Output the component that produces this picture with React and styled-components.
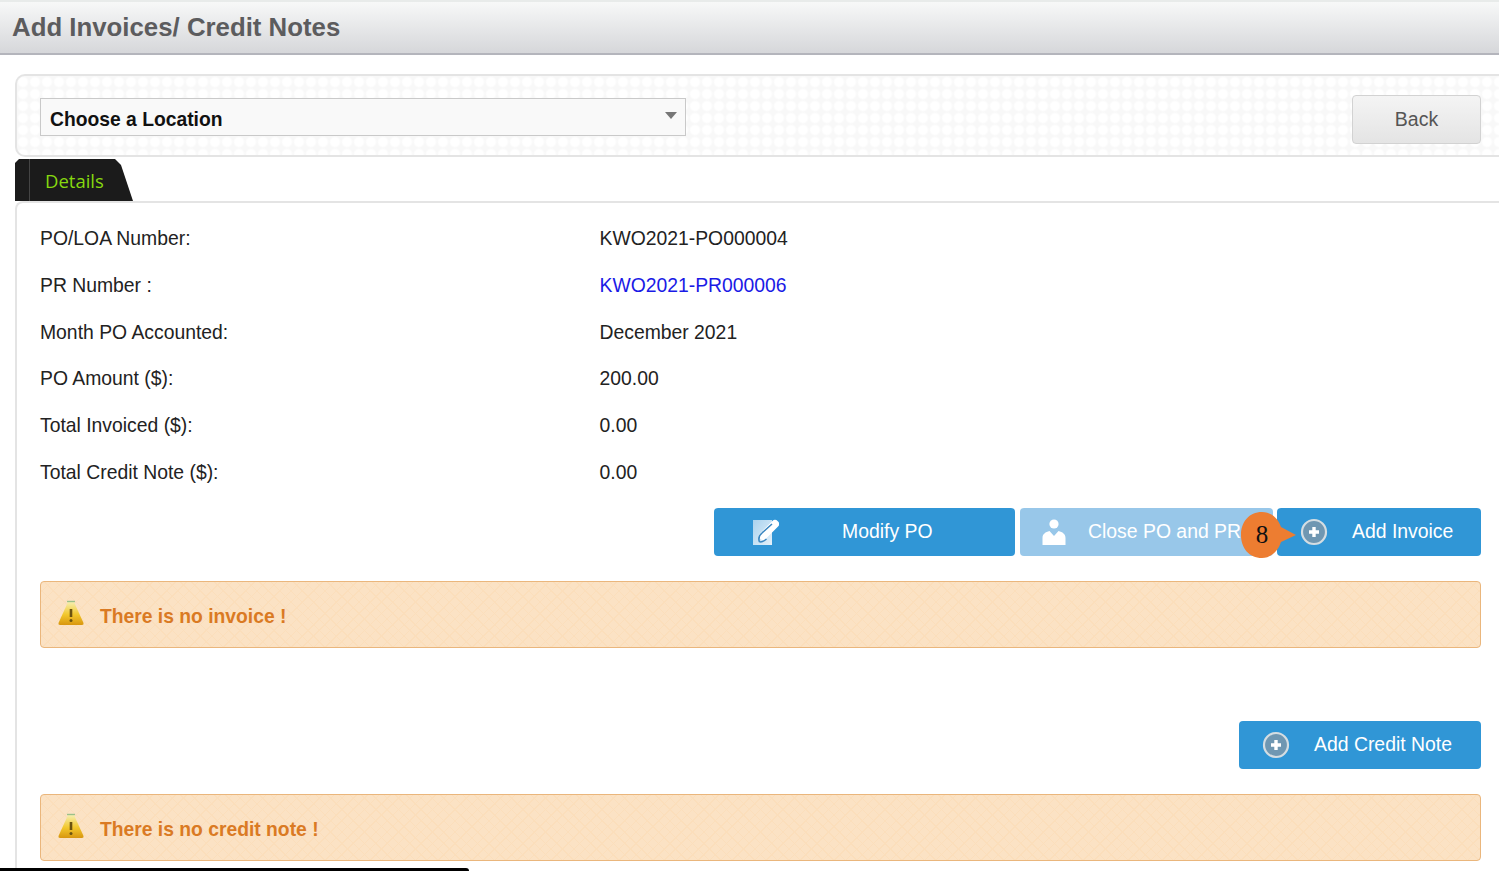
import React from "react";
import styled, { createGlobalStyle } from "styled-components";

const Global = createGlobalStyle`
  html, body { margin: 0; padding: 0; height: 871px; overflow: hidden; background: #fff; }
  body { font-family: "Liberation Sans", Arial, sans-serif; color: #222; }
  #root { height: 871px; position: relative; overflow: hidden; }
`;

const Header = styled.header`
  height: 55px;
  box-sizing: border-box;
  border-top: 2px solid #e8ebea;
  border-bottom: 2px solid #b4b5bc;
  background: linear-gradient(#f7f8f8, #d6d7da);
  padding-left: 12px;
  display: flex;
  align-items: center;
`;
const Title = styled.h1`
  margin: 0;
  font-size: 25.8px;
  font-weight: 700;
  color: #5c5c5e;
`;
const Page = styled.main`
  padding: 19px 0 0 15px;
`;
const Toolbar = styled.section`
  height: 83px;
  box-sizing: border-box;
  border: 2px solid #e4e4e4;
  border-right: 0;
  border-radius: 10px 0 0 10px;
  background-color: #fff;
  background-image: radial-gradient(circle at center, #fff 4px, #f8f8f8 6px);
  background-size: 12px 12px;
  display: flex;
  align-items: flex-start;
  justify-content: space-between;
  padding: 22px 18px 0 23px;
`;
const Select = styled.div`
  width: 646px;
  height: 38px;
  box-sizing: border-box;
  border: 1px solid #c9c9c9;
  background: #f9f9f9;
  display: flex;
  align-items: center;
  justify-content: space-between;
  padding: 6px 8px 0 9px;
  font-size: 19.3px;
  font-weight: 700;
  color: #111;
`;
const Caret = styled.span`
  width: 0;
  height: 0;
  border-left: 6px solid transparent;
  border-right: 6px solid transparent;
  border-top: 7px solid #777;
  margin: -10px 0 0;
`;
const BackButton = styled.button`
  width: 129px;
  height: 49px;
  margin-top: -3px;
  border: 1px solid #d2d2d2;
  border-radius: 4px;
  background: linear-gradient(#f4f4f4, #e4e4e4);
  color: #555;
  font: 19.5px "Liberation Sans", Arial, sans-serif;
`;
const TabRow = styled.nav`
  height: 44px;
  display: flex;
  align-items: flex-end;
`;
const Tab = styled.div`
  width: 118px;
  height: 42px;
  box-sizing: border-box;
  background: #1b1b1b;
  clip-path: polygon(0 4px, 4px 0, 100px 0, 106px 6px, 118px 42px, 0 42px);
  color: #86d80f;
  font: 18.5px "Open Sans", sans-serif;
  display: flex;
  align-items: center;
  padding-left: 30px;
  position: relative;
  &::before {
    content: "";
    position: absolute;
    left: 14px;
    top: 0;
    bottom: 0;
    width: 1px;
    background: #444;
  }
`;
const Panel = styled.section`
  height: 700px;
  box-sizing: border-box;
  border-top: 2px solid #e4e4e4;
  border-left: 2px solid #e4e4e4;
  border-top-left-radius: 8px;
  padding: 12px 18px 0 23px;
`;
const Detail = styled.div`
  height: 46.85px;
  display: grid;
  grid-template-columns: 559.5px 1fr;
  align-items: center;
  font-size: 19.35px;
  color: #222;
`;
const PrLink = styled.a`
  color: #1a1ae6;
  text-decoration: none;
`;
const Actions = styled.div`
  display: flex;
  justify-content: flex-end;
  gap: 4px;
  margin-top: ${(p) => p.$top}px;
`;
const ActionButton = styled.button`
  width: ${(p) => p.$w}px;
  height: 48px;
  box-sizing: border-box;
  border: 0;
  border-radius: 4px;
  margin-right: ${(p) => p.$after || 0}px;
  background: ${(p) => (p.$muted ? "#98c7e9" : "#3096d6")};
  color: #fff;
  font: 19.4px "Liberation Sans", Arial, sans-serif;
  display: flex;
  align-items: center;
  padding-left: ${(p) => p.$pad}px;
  white-space: nowrap;
  overflow: hidden;
`;
const ButtonIcon = styled.svg`
  width: 28px;
  height: 28px;
  flex: none;
`;
const ButtonLabel = styled.span`
  margin-left: ${(p) => p.$gap}px;
  margin-top: -1px;
`;
const Alert = styled.div`
  height: 67px;
  box-sizing: border-box;
  margin-top: ${(p) => p.$top}px;
  border: 1px solid #eab67c;
  border-radius: 4px;
  background-color: #fbe2c4;
  background-image: repeating-linear-gradient(45deg, #fbdebb 0 1px, transparent 1px 8px),
    repeating-linear-gradient(-45deg, #fbdebb 0 1px, transparent 1px 8px);
  display: flex;
  align-items: center;
  padding-left: 17px;
  font-size: 19.3px;
  font-weight: 700;
  color: #da7a23;
`;
const AlertText = styled.span`
  margin-top: 4px;
`;
const AlertIcon = styled.svg`
  width: 26px;
  height: 26px;
  margin: -3px 16px 0 0;
  flex: none;
`;
const Callout = styled.svg`
  position: absolute;
  left: 1240px;
  top: 512px;
  width: 58px;
  height: 46px;
`;
const CalloutText = styled.text`
  font-family: "Liberation Serif", serif;
  font-size: 25px;
  fill: #111;
`;
const BottomBar = styled.div`
  position: absolute;
  left: 0;
  bottom: 0;
  width: 469px;
  height: 3px;
  background: #000;
  border-top-right-radius: 3px;
`;

const PlusIcon = () => (
  <ButtonIcon viewBox="0 0 28 28">
    <circle cx="14" cy="14" r="12" fill="#6f97b2" stroke="#d4dde2" strokeWidth="2.2" />
    <path d="M14 9v10M9 14h10" stroke="#fff" strokeWidth="3.4" />
  </ButtonIcon>
);

const EditIcon = () => (
  <ButtonIcon viewBox="0 0 28 28">
    <defs>
      <linearGradient id="sheet" x1="0" y1="0" x2="1" y2="1">
        <stop offset="0" stopColor="#a9d2ee" />
        <stop offset="1" stopColor="#e4f1fa" />
      </linearGradient>
    </defs>
    <rect x="2" y="2" width="19" height="25" fill="url(#sheet)" />
    <path d="M12 18L24 6" stroke="#fff" strokeWidth="8" strokeLinecap="round" />
    <path d="M8.500 24c-1.500-4 0-7 2.500-9L21 6" fill="none" stroke="#3a86c0" strokeWidth="1.600" />
    <path d="M8.500 24c3 0 5-1 7-3" fill="none" stroke="#3a86c0" strokeWidth="1.400" />
  </ButtonIcon>
);

const UserIcon = () => (
  <ButtonIcon viewBox="0 0 28 28">
    <circle cx="14" cy="6" r="4.600" fill="#fff" />
    <path d="M2.500 27v-7c0-4 3-6 7-7l4.500 5 4.500-5c4 1 7 3 7 7v7z" fill="#fff" />
  </ButtonIcon>
);

const WarnIcon = () => (
  <AlertIcon viewBox="0 0 26 26">
    <defs>
      <linearGradient id="warn" x1="0" y1="0" x2="0" y2="1">
        <stop offset="0" stopColor="#f6efb0" />
        <stop offset="0.55" stopColor="#f2c72c" />
        <stop offset="1" stopColor="#d8960f" />
      </linearGradient>
    </defs>
    <path d="M10 2h6l9.500 21q.5 2-1.500 2H2q-2 0-1.500-2z" fill="url(#warn)" />
    <path d="M9 1.500h8" stroke="#9cc08a" strokeWidth="1.400" />
    <path d="M13 9v8" stroke="#6b5310" strokeWidth="2.600" />
    <circle cx="13" cy="20.500" r="1.500" fill="#6b5310" />
  </AlertIcon>
);

const details = [
  ["PO/LOA Number:", "KWO2021-PO000004"],
  ["PR Number :", "KWO2021-PR000006", true],
  ["Month PO Accounted:", "December 2021"],
  ["PO Amount ($):", "200.00"],
  ["Total Invoiced ($):", "0.00"],
  ["Total Credit Note ($):", "0.00"],
];

export default function App() {
  return (
    <>
      <Global />
      <Header>
        <Title>Add Invoices/ Credit Notes</Title>
      </Header>
      <Page>
        <Toolbar>
          <Select>
            Choose a Location
            <Caret />
          </Select>
          <BackButton>Back</BackButton>
        </Toolbar>
        <TabRow>
          <Tab>Details</Tab>
        </TabRow>
        <Panel>
          {details.map(([label, value, link]) => (
            <Detail key={label}>
              <span>{label}</span>
              {link ? <PrLink href="#">{value}</PrLink> : <span>{value}</span>}
            </Detail>
          ))}
          <Actions $top={12}>
            <ActionButton $w={301} $pad={37} $after={1}>
              <EditIcon />
              <ButtonLabel $gap={63}>Modify PO</ButtonLabel>
            </ActionButton>
            <ActionButton $w={253} $pad={20} $muted>
              <UserIcon />
              <ButtonLabel $gap={20}>Close PO and PR</ButtonLabel>
            </ActionButton>
            <ActionButton $w={204} $pad={23}>
              <PlusIcon />
              <ButtonLabel $gap={24}>Add Invoice</ButtonLabel>
            </ActionButton>
          </Actions>
          <Alert $top={25}>
            <WarnIcon />
            <AlertText>There is no invoice !</AlertText>
          </Alert>
          <Actions $top={73}>
            <ActionButton $w={242} $pad={23}>
              <PlusIcon />
              <ButtonLabel $gap={24}>Add Credit Note</ButtonLabel>
            </ActionButton>
          </Actions>
          <Alert $top={25}>
            <WarnIcon />
            <AlertText>There is no credit note !</AlertText>
          </Alert>
        </Panel>
      </Page>
      <Callout viewBox="0 0 58 46">
        <path d="M1 23C1 10 9 0 22 0c9 0 16 6 19 15l15 8-15 7c-3 9-10 16-19 16C9 46 1 36 1 23z" fill="#ed7d31" />
        <CalloutText x="22" y="31" textAnchor="middle">8</CalloutText>
      </Callout>
      <BottomBar />
    </>
  );
}
